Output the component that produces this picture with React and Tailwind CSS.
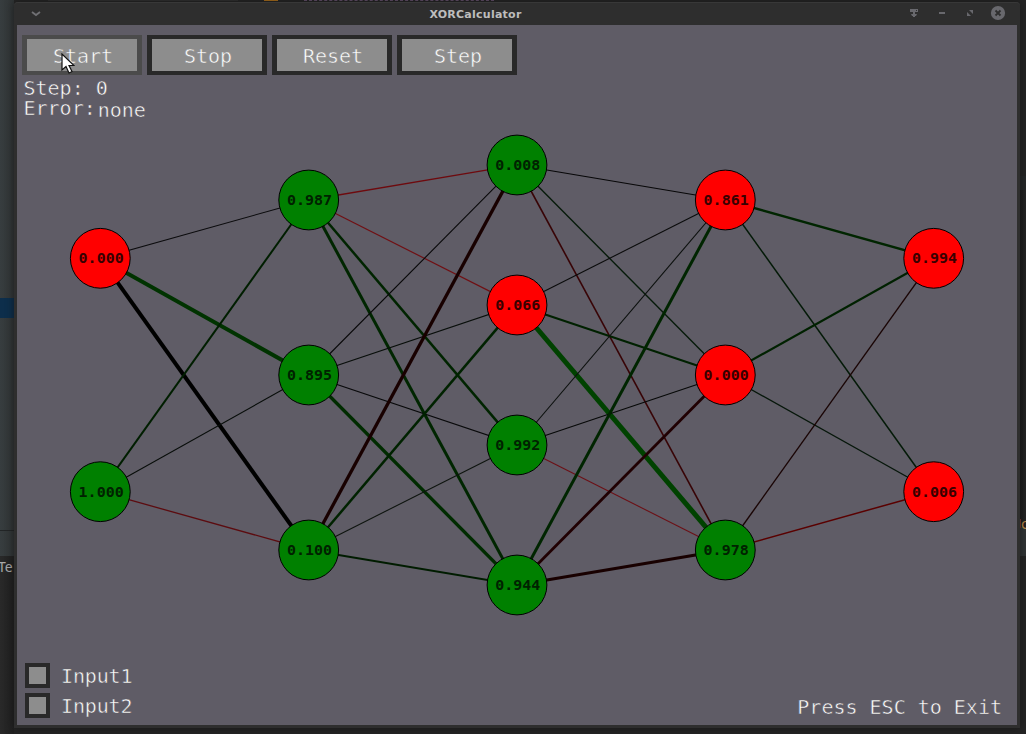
const NODES = [
  [[83.3, 233.3, "0.000", 0], [83.3, 466.7, "1.000", 1]],
  [[291.7, 175, "0.987", 1], [291.7, 350, "0.895", 1], [291.7, 525, "0.100", 1]],
  [[500, 140, "0.008", 1], [500, 280, "0.066", 0], [500, 420, "0.992", 1], [500, 560, "0.944", 1]],
  [[708.3, 175, "0.861", 0], [708.3, 350, "0.000", 0], [708.3, 525, "0.978", 1]],
  [[916.7, 233.3, "0.994", 0], [916.7, 466.7, "0.006", 0]],
];

// [layer, from, to, colour, width]
const EDGES = [
  [0, 0, 0, "#0b0b0d", 1.1], [0, 0, 1, "#003300", 4], [0, 0, 2, "#000000", 4],
  [0, 1, 0, "#001e00", 2], [0, 1, 1, "#080d0a", 1.1], [0, 1, 2, "#5c0c10", 1.3],
  [1, 0, 0, "#6e0a0e", 1.3], [1, 0, 1, "#701014", 1.2], [1, 0, 2, "#002400", 2.5], [1, 0, 3, "#002600", 3],
  [1, 1, 0, "#080809", 1.1], [1, 1, 1, "#080e0a", 1.2], [1, 1, 2, "#08090a", 1.1], [1, 1, 3, "#002c00", 3.3],
  [1, 2, 0, "#180000", 3.3], [1, 2, 1, "#002200", 2.5], [1, 2, 2, "#0e140f", 1.1], [1, 2, 3, "#001c00", 2],
  [2, 0, 0, "#070708", 1.2], [2, 0, 1, "#061a0a", 1.4], [2, 0, 2, "#380406", 1.6],
  [2, 1, 0, "#0a0b0b", 1.1], [2, 1, 1, "#002100", 2.2], [2, 1, 2, "#004200", 5],
  [2, 2, 0, "#0c100e", 1.1], [2, 2, 1, "#060807", 1.1], [2, 2, 2, "#6c1016", 1.1],
  [2, 3, 0, "#002500", 3], [2, 3, 1, "#200002", 2.8], [2, 3, 2, "#180000", 3.2],
  [3, 0, 0, "#002500", 2.4], [3, 0, 1, "#041a08", 1.5],
  [3, 1, 0, "#002100", 2.2], [3, 1, 1, "#07170b", 1.3],
  [3, 2, 0, "#1a0505", 1.4], [3, 2, 1, "#5a0000", 1.5],
];

function Network() {
  return (
    <svg width="1000" height="700" viewBox="0 0 1000 700" className="absolute inset-0">
      {EDGES.map(([l, a, b, color, w]) => (
        <line key={`${l}-${a}-${b}`} x1={NODES[l][a][0]} y1={NODES[l][a][1]} x2={NODES[l + 1][b][0]} y2={NODES[l + 1][b][1]} stroke={color} strokeWidth={w} />
      ))}
      {NODES.flat().map(([x, y, value, on]) => (
        <g key={`${x}-${y}`}>
          <circle cx={x} cy={y} r="29.9" fill={on ? "#008000" : "#ff0000"} stroke="#000" strokeWidth="1" />
          <text
            transform={`translate(${x - 21.7} ${Math.round(y + 4.8)}) scale(1 0.88)`}
            fill={on ? "#002200" : "#380000"}
            className="font-['DejaVu_Sans_Mono',monospace] text-[15px] font-bold [-webkit-text-stroke:0]"
          >
            {value}
          </text>
        </g>
      ))}
    </svg>
  );
}

function Button({ label, active }) {
  return (
    <button
      className={`h-10 w-[120px] border-x-[5px] border-y-4 bg-[#8d8d8d] pl-[2px] pt-px text-center leading-[32px] [-webkit-text-stroke:0.5px_#8d8d8d] ${active ? "border-[#4b4b4b]" : "border-[#292929]"}`}
    >
      {label}
    </button>
  );
}

function Checkbox({ label }) {
  return (
    <div className="flex h-[25px] items-center gap-[11px]">
      <span className="size-[25px] border-4 border-[#292929] bg-[#8d8d8d]" />
      <span className="tracking-[-0.15px]">{label}</span>
    </div>
  );
}

function TitleBar() {
  return (
    <header className="relative flex h-[22px] items-center justify-center rounded-t-sm border-t border-[#383838] bg-[#2e2e2e]">
      <svg className="absolute left-[17px] top-[8px]" width="10" height="6" viewBox="0 0 10 6" fill="none" stroke="#707074" strokeWidth="1.8">
        <path d="M1 1 L5 4 L9 1" />
      </svg>
      <span className="mr-[83px] pt-[2px] font-['DejaVu_Sans',sans-serif] text-[11px] font-bold leading-[18px] tracking-[0.25px] text-[#bdbdbd] [-webkit-text-stroke:0]">XORCalculator</span>
      <svg className="absolute right-[10px] top-0" width="100" height="20" viewBox="0 0 100 20" fill="#68686d">
        <path d="M0 6h8v3H5v2h2l-1 2H5v1H3v-1H2l-1-2h2V9H0z" />
        <path d="M6 7h1v1H6z" fill="#2e2e2e" />
        <path d="M29 9h6v2h-6z" />
        <path d="M59 7h4v4zM57 9l4 4h-4z" />
        <circle cx="88" cy="10" r="7.1" />
        <path d="M85.5 7.5l5 5m0-5l-5 5" stroke="#2e2e2e" strokeWidth="1.8" />
      </svg>
    </header>
  );
}

export default function App() {
  return (
    <div className="relative flex h-[734px] w-[1026px] overflow-hidden bg-[#242424] pl-[14px] pt-[2px]">
      <div className="absolute left-0 top-0 flex h-full w-[14px] flex-col overflow-hidden">
        <div className="h-[298px] bg-linear-to-r from-[#373d3f] to-[#303435]" />
        <div className="h-5 bg-[#0d2e4b]" />
        <div className="h-[212px] bg-linear-to-r from-[#373d3f] to-[#303435]" />
        <div className="h-[26px] border-t border-[#222526] bg-linear-to-r from-[#373d3f] to-[#303435]" />
        <div className="h-[178px] bg-linear-to-r from-[#292929] to-[#202020] font-['Noto_Sans',sans-serif] text-[14px] leading-[22px] text-[#a9a9a9]">
          <span className="-ml-[2px]">Te</span>
        </div>
      </div>
      <div className="absolute left-[48px] top-0 flex h-px gap-[26px]">
        <span className="w-[190px] bg-[#303030]" />
        <span className="w-[14px] bg-[#ad701c]" />
        <span className="w-[190px] border-t border-dashed border-[#65506c]" />
      </div>
      <div className="absolute right-0 top-[176px] flex h-[380px] w-[6px] flex-col overflow-hidden bg-linear-to-r from-[#1b1b1b] to-[#242424]">
        <div className="h-[14px] bg-[#252728]" />
        <div className="mt-[337px] h-[29px] bg-[#303435]" />
        <span className="absolute left-0 top-[343px] h-[9px] w-px bg-[#7a3527]" />
        <span className="absolute left-[1px] top-[337px] font-['Noto_Sans',sans-serif] text-[15px] leading-[20px] text-[#bc8b49]">o</span>
      </div>

      <div className="relative flex h-[726px] w-[1006px] flex-col rounded-t-sm bg-[#2e2e2e] shadow-[0_0_8px_#1119]">
        <TitleBar />
        <main className="relative mx-[3px] mt-px flex h-[700px] w-[1000px] flex-col justify-between bg-[#5f5c66] font-['DejaVu_Sans_Mono',monospace] text-[20px] leading-[20px] text-white [-webkit-text-stroke:0.5px_#5f5c66]">
          <Network />
          <div className="relative">
            <nav className="flex gap-[5px] pl-[5px] pt-[10px]">
              <Button label="Start" active />
              <Button label="Stop" />
              <Button label="Reset" />
              <Button label="Step" />
            </nav>
            <div className="pl-[6.5px] pt-[3px]">
              <p className="whitespace-pre">Step: 0</p>
              <p className="flex gap-[2px]">
                <span>Error:</span>
                <span className="pt-[2px]">none</span>
              </p>
            </div>
          </div>
          <footer className="relative flex items-end justify-between pb-[7px] pl-2 pr-[15px]">
            <div className="flex flex-col gap-[5px]">
              <Checkbox label="Input1" />
              <Checkbox label="Input2" />
            </div>
            <span className="whitespace-pre pb-px">Press ESC to Exit</span>
          </footer>
          <svg className="absolute left-[44px] top-[28px]" width="14" height="22" viewBox="0 0 14 22">
            <path d="M1 1v16l4-3.5 3 6.5 3-1.5-3-6h5z" fill="#fff" stroke="#111" strokeWidth="1.2" />
          </svg>
        </main>
      </div>
    </div>
  );
}
